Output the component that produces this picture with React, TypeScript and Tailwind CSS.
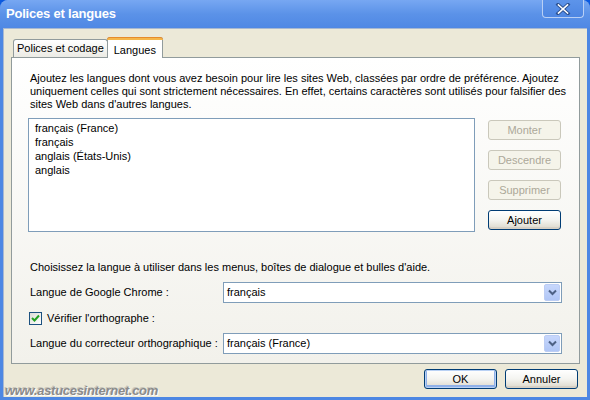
import React from "react";

const font = { fontFamily: '"Liberation Sans", Arial, sans-serif' };

function XpButton({ label, disabled, isDefault }: { label: string; disabled?: boolean; isDefault?: boolean }) {
  if (disabled) {
    return (
      <div className="w-[73px] h-[20px] rounded-[3px] border border-[#cac8bb] bg-[#f5f4ea] flex items-center justify-center text-[11px] text-[#aca899]">
        {label}
      </div>
    );
  }
  return (
    <div
      className={
        "w-[73px] h-[20px] rounded-[3px] border border-[#003c74] bg-gradient-to-b from-white via-[#f4f4f0] to-[#dcd8cb] flex items-center justify-center text-[11px] text-black " +
        (isDefault ? "shadow-[inset_0_0_0_1px_#b9d1f4,inset_0_-1px_0_2px_#8fb0e8]" : "shadow-[inset_0_-2px_0_0_#d6d0c5]")
      }
    >
      {label}
    </div>
  );
}

function Select({ value }: { value: string }) {
  return (
    <div className="w-[339px] h-[21px] border border-[#7f9db9] bg-white flex items-center justify-between pl-[3px] pr-[1px]">
      <span className="text-[11px] text-black">{value}</span>
      <div className="w-[16px] h-[17px] rounded-[2px] bg-gradient-to-b from-[#c7d7fc] to-[#b0c6f6] border border-[#bccdf4] flex items-center justify-center">
        <svg width="9" height="7" viewBox="0 0 9 7">
          <path d="M1 1.5 L4.5 5 L8 1.5" stroke="#4d6185" strokeWidth="2" fill="none" />
        </svg>
      </div>
    </div>
  );
}

export default function App() {
  return (
    <div className="w-[590px] h-[400px] relative bg-[#0c5adf] overflow-hidden" style={font}>
      <div className="w-[590px] h-[400px] flex flex-col bg-[#4d87e3] rounded-t-[8px]">
        {/* Title bar */}
        <div className="h-[28px] relative rounded-t-[8px] bg-gradient-to-b from-[#77a7f2] via-[#5b92e8] to-[#4f88e4] flex items-center pl-[6px]">
          <span className="text-white font-bold text-[13px] tracking-[-0.2px]">Polices et langues</span>
          <div className="absolute left-[542px] top-0 w-[42px] h-[18px] rounded-b-[4px] border border-t-0 border-[#b9d0f5] bg-gradient-to-b from-[#5d94ea] to-[#4d86e2] flex items-center justify-center">
            <svg width="16" height="12" viewBox="0 0 16 12">
              <path d="M3 1.5 L13 10.5 M13 1.5 L3 10.5" stroke="#2a4f8f" strokeWidth="3.4" strokeLinecap="square" />
              <path d="M3.5 2 L12.5 10 M12.5 2 L3.5 10" stroke="#ffffff" strokeWidth="1.6" strokeLinecap="square" />
            </svg>
          </div>
        </div>
        {/* Body */}
        <div className="flex-1 mx-[3px] mb-[3px] bg-[#ece9d8] border-l border-t border-[#a8b8d0] flex flex-col text-[11px] text-black">
          {/* Tabs */}
          <div className="flex items-end pl-[9px] mt-[8px] h-[21px] relative z-10">
            <div className="h-[18px] px-[3px] border border-b-0 border-[#919b9c] rounded-t-[3px] bg-gradient-to-b from-white to-[#ecebe5] flex items-center mb-[1px]">
              Polices et codage
            </div>
            <div className="h-[21px] w-[56px] -ml-px border border-b-0 border-[#919b9c] rounded-t-[3px] bg-white flex flex-col items-center relative">
              <div className="absolute -top-px -left-px -right-px h-[3px] rounded-t-[3px] bg-[#f5b64a] border-t border-[#e68b2c]" />
              <div className="mt-[4px]">Langues</div>
            </div>
          </div>
          {/* Panel */}
          <div className="mx-[7px] -mt-px h-[307px] border border-[#919b9c] bg-gradient-to-b from-white to-[#f2f1eb] flex flex-col">
            <div className="pl-[18px] pt-[14px] leading-[13px]">
              Ajoutez les langues dont vous avez besoin pour lire les sites Web, classées par ordre de préférence. Ajoutez
              <br />
              uniquement celles qui sont strictement nécessaires. En effet, certains caractères sont utilisés pour falsifier des
              <br />
              sites Web dans d'autres langues.
            </div>
            <div className="flex mt-[7px] pl-[16px]">
              <div className="w-[447px] h-[114px] border border-[#7f9db9] bg-white pl-[6px] pt-[2px] leading-[14px]">
                <div>français (France)</div>
                <div>français</div>
                <div>anglais (États-Unis)</div>
                <div>anglais</div>
              </div>
              <div className="ml-[13px] mt-[2px] flex flex-col gap-[10px]">
                <XpButton label="Monter" disabled />
                <XpButton label="Descendre" disabled />
                <XpButton label="Supprimer" disabled />
                <XpButton label="Ajouter" />
              </div>
            </div>
            <div className="pl-[18px] mt-[29px] leading-[13px]">
              Choisissez la langue à utiliser dans les menus, boîtes de dialogue et bulles d'aide.
            </div>
            <div className="pl-[18px] mt-[8px] flex items-center">
              <div className="w-[193px]">Langue de Google Chrome :</div>
              <Select value="français" />
            </div>
            <div className="pl-[17px] mt-[9px] flex items-center h-[13px]">
              <div className="w-[13px] h-[13px] border border-[#1c5180] bg-gradient-to-br from-[#dcdcd7] to-white flex items-center justify-center">
                <svg width="9" height="9" viewBox="0 0 9 9">
                  <path d="M1 4 L3.5 6.5 L8 1.5" stroke="#21a121" strokeWidth="2" fill="none" />
                </svg>
              </div>
              <div className="ml-[5px]">Vérifier l'orthographe :</div>
            </div>
            <div className="pl-[18px] mt-[8px] flex items-center">
              <div className="w-[193px]">Langue du correcteur orthographique :</div>
              <Select value="français (France)" />
            </div>
          </div>
          {/* Bottom buttons */}
          <div className="flex justify-end gap-[8px] pr-[9px] mt-[5px]">
            <XpButton label="OK" isDefault />
            <XpButton label="Annuler" />
          </div>
        </div>
      </div>
      <div className="absolute left-[5px] top-[381px] text-[13px] font-bold italic text-[#8b8b8b] [text-shadow:1px_1px_0_#ffffff,-1px_-1px_0_#c8c6bc] tracking-[-0.3px]">
        www.astucesinternet.com
      </div>
    </div>
  );
}
